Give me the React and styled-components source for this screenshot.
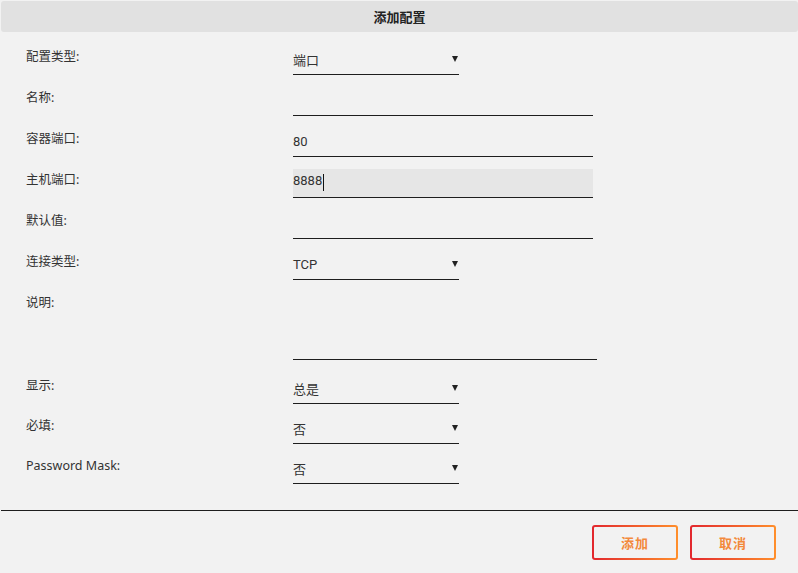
import styled, { createGlobalStyle } from "styled-components";

const GlobalStyle = createGlobalStyle`
  body {
    margin: 0;
    background: #f2f2f2;
    font-family: "Noto Sans", "Noto Sans CJK SC", sans-serif;
    color: #333;
  }
`;

const Page = styled.div`
  width: 798px;
  height: 573px;
  display: flex;
  flex-direction: column;
  overflow: hidden;
`;

const Header = styled.header`
  margin: 1px 0 0 1px;
  height: 31px;
  background: #e1e1e1;
  border-radius: 3px;
  display: flex;
  align-items: center;
  justify-content: center;
  font-size: 13px;
  font-weight: 700;
  color: #222;
`;

const Form = styled.div`
  padding: 14px 0 0 26px;
  display: flex;
  flex-direction: column;
`;

const Row = styled.div`
  display: grid;
  grid-template-columns: 267px auto;
  height: ${(p) => p.$height || 41}px;
`;

const Label = styled.div`
  font-size: 12.5px;
  line-height: 14px;
  padding-top: 4px;
  color: #333;
`;

const Field = styled.div`
  box-sizing: border-box;
  height: 29px;
  width: ${(p) => p.$width || 300}px;
  padding-bottom: 2px;
  border-bottom: 1px solid #1e1e1e;
  background: ${(p) => (p.$focused ? "#e6e6e6" : "transparent")};
  display: flex;
  align-items: center;
  justify-content: space-between;
  font-family: Roboto, "Noto Sans CJK SC", sans-serif;
  font-size: 13px;
  color: #333;
`;

const TextArea = styled(Field)`
  height: 68px;
  width: 304px;
`;

const Caret = styled.span`
  display: inline-block;
  width: 1px;
  height: 17px;
  background: #111;
  margin-left: 1px;
  vertical-align: middle;
`;

const Arrow = styled.span`
  width: 0;
  height: 0;
  margin-right: 1px;
  border-left: 3px solid transparent;
  border-right: 3px solid transparent;
  border-top: 6px solid #222;
`;

const Divider = styled.div`
  margin: 14px 0 0 1px;
  border-top: 1px solid #1e1e1e;
`;

const Footer = styled.div`
  display: flex;
  justify-content: flex-end;
  gap: 12px;
  padding: 14px 22px 0 0;
`;

const Button = styled.button`
  box-sizing: border-box;
  width: 86px;
  height: 35px;
  border: 2px solid transparent;
  border-radius: 3px;
  background: linear-gradient(#f2f2f2, #f2f2f2) padding-box,
    linear-gradient(90deg, #e2272e, #ff8f2c) border-box;
  font-family: "Noto Sans CJK SC", sans-serif;
  font-size: 13px;
  font-weight: 600;
  color: #f3893b;
  letter-spacing: 1px;
  cursor: pointer;
`;

const Select = ({ value }) => (
  <Field $width={166}>
    <span>{value}</span>
    <Arrow />
  </Field>
);

const App = () => {
  return (
    <Page>
      <GlobalStyle />
      <Header>添加配置</Header>
      <Form>
        <Row>
          <Label>配置类型:</Label>
          <Select value="端口" />
        </Row>
        <Row>
          <Label>名称:</Label>
          <Field />
        </Row>
        <Row>
          <Label>容器端口:</Label>
          <Field>80</Field>
        </Row>
        <Row>
          <Label>主机端口:</Label>
          <Field $focused>
            <span>
              8888
              <Caret />
            </span>
          </Field>
        </Row>
        <Row>
          <Label>默认值:</Label>
          <Field />
        </Row>
        <Row>
          <Label>连接类型:</Label>
          <Select value="TCP" />
        </Row>
        <Row $height={83}>
          <Label>说明:</Label>
          <TextArea />
        </Row>
        <Row $height={40}>
          <Label>显示:</Label>
          <Select value="总是" />
        </Row>
        <Row $height={40}>
          <Label>必填:</Label>
          <Select value="否" />
        </Row>
        <Row $height={41}>
          <Label>Password Mask:</Label>
          <Select value="否" />
        </Row>
      </Form>
      <Divider />
      <Footer>
        <Button>添加</Button>
        <Button>取消</Button>
      </Footer>
    </Page>
  );
};

export default App;
